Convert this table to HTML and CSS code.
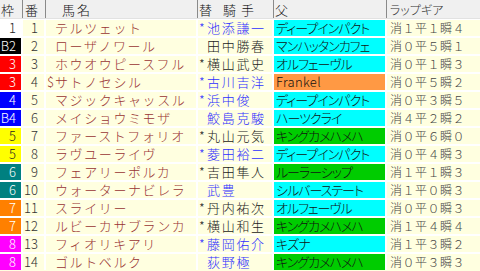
FILE: index.html
```html
<!DOCTYPE html>
<html lang="ja">
<head>
<meta charset="utf-8">
<link rel="stylesheet" href="styles.css">
</head>
<body>
<div class="sheet">
  <div class="head">
    <div class="h h-waku">枠</div>
    <div class="h h-ban">番</div>
    <div class="h h-name">馬名</div>
    <div class="h h-jockey"><span class="kae">替</span><span class="kishu">騎手</span></div>
    <div class="h h-sire">父</div>
    <div class="h h-lap">ラップギア</div>
  </div>
  <div class="rows">
    <div class="row"><div class="c waku w1">1</div><div class="c ban">1</div><div class="c name"><span class="mk"></span>テルツェット</div><div class="c jk blue"><span class="mk">*</span>池添謙一</div><div class="c sire cyan">ディープインパクト</div><div class="c lap">消１平１瞬４</div></div>
    <div class="row"><div class="c waku w2">B2</div><div class="c ban">2</div><div class="c name"><span class="mk"></span>ローザノワール</div><div class="c jk dark"><span class="mk"></span>田中勝春</div><div class="c sire cyan">マンハッタンカフェ</div><div class="c lap">消０平５瞬１</div></div>
    <div class="row"><div class="c waku w3">3</div><div class="c ban">3</div><div class="c name"><span class="mk"></span>ホウオウピースフル</div><div class="c jk dark"><span class="mk">*</span>横山武史</div><div class="c sire cyan">オルフェーヴル</div><div class="c lap">消０平１瞬３</div></div>
    <div class="row"><div class="c waku w3">3</div><div class="c ban">4</div><div class="c name"><span class="mk">$</span>サトノセシル</div><div class="c jk blue"><span class="mk">*</span>古川吉洋</div><div class="c sire orange latin">Frankel</div><div class="c lap">消０平５瞬２</div></div>
    <div class="row"><div class="c waku w4">4</div><div class="c ban">5</div><div class="c name"><span class="mk"></span>マジックキャッスル</div><div class="c jk blue"><span class="mk">*</span>浜中俊</div><div class="c sire cyan">ディープインパクト</div><div class="c lap">消０平３瞬５</div></div>
    <div class="row"><div class="c waku w4">B4</div><div class="c ban">6</div><div class="c name"><span class="mk"></span>メイショウミモザ</div><div class="c jk blue"><span class="mk"></span>鮫島克駿</div><div class="c sire cyan">ハーツクライ</div><div class="c lap">消４平２瞬２</div></div>
    <div class="row"><div class="c waku w5">5</div><div class="c ban">7</div><div class="c name"><span class="mk"></span>ファーストフォリオ</div><div class="c jk dark"><span class="mk">*</span>丸山元気</div><div class="c sire green">キングカメハメハ</div><div class="c lap">消０平６瞬０</div></div>
    <div class="row"><div class="c waku w5">5</div><div class="c ban">8</div><div class="c name"><span class="mk"></span>ラヴユーライヴ</div><div class="c jk blue"><span class="mk">*</span>菱田裕二</div><div class="c sire cyan">ディープインパクト</div><div class="c lap">消０平４瞬３</div></div>
    <div class="row"><div class="c waku w6">6</div><div class="c ban">9</div><div class="c name"><span class="mk"></span>フェアリーポルカ</div><div class="c jk dark"><span class="mk">*</span>吉田隼人</div><div class="c sire green">ルーラーシップ</div><div class="c lap">消１平１瞬３</div></div>
    <div class="row"><div class="c waku w6">6</div><div class="c ban">10</div><div class="c name"><span class="mk"></span>ウォーターナビレラ</div><div class="c jk blue"><span class="mk"></span>武豊</div><div class="c sire cyan">シルバーステート</div><div class="c lap">消１平０瞬３</div></div>
    <div class="row"><div class="c waku w7">7</div><div class="c ban">11</div><div class="c name"><span class="mk"></span>スライリー</div><div class="c jk dark"><span class="mk">*</span>丹内祐次</div><div class="c sire cyan">オルフェーヴル</div><div class="c lap">消０平０瞬３</div></div>
    <div class="row"><div class="c waku w7">7</div><div class="c ban">12</div><div class="c name"><span class="mk"></span>ルビーカサブランカ</div><div class="c jk dark"><span class="mk">*</span>横山和生</div><div class="c sire green">キングカメハメハ</div><div class="c lap">消１平４瞬４</div></div>
    <div class="row"><div class="c waku w8">8</div><div class="c ban">13</div><div class="c name"><span class="mk"></span>フィオリキアリ</div><div class="c jk blue"><span class="mk">*</span>藤岡佑介</div><div class="c sire cyan">キズナ</div><div class="c lap">消１平３瞬２</div></div>
    <div class="row"><div class="c waku w8">8</div><div class="c ban">14</div><div class="c name"><span class="mk"></span>ゴルトベルク</div><div class="c jk blue"><span class="mk"></span>荻野極</div><div class="c sire green">キングカメハメハ</div><div class="c lap">消０平３瞬３</div></div>
  </div>
</div>
</body>
</html>
```

FILE: styles.css
```css
html, body {
  margin: 0;
  padding: 0;
  background: #ffffe0;
}
body {
  width: 480px;
  height: 271px;
  overflow: hidden;
  font-family: "Noto Sans CJK JP", "Noto Sans", sans-serif;
  font-size: 13px;
  font-weight: 300;
  color: #222;
}
.sheet {
  width: 480px;
}
.head {
  display: grid;
  grid-template-columns: 22px 23px 152px 76px 113px 94px;
  height: 18px;
  background: #f0f0f0;
  border-bottom: 1px solid #e2e2e2;
}
.h {
  line-height: 18px;
  padding-top: 1px;
  height: 17px;
  white-space: nowrap;
  color: #111;
}
.h + .h {
  border-left: 1px solid #8a8a8a;
}
.h-waku { padding-left: 1px; }
.h-ban { padding-left: 2px; }
.h-name { padding-left: 16px; letter-spacing: 2px; }
.h-jockey { padding-left: 1px; }
.h-jockey .kishu { margin-left: 11px; letter-spacing: 5px; }
.h-sire { padding-left: 1px; }
.h-lap {
  padding-left: 3px;
  font-size: 12px;
  font-feature-settings: "palt";
  color: #333;
}
.rows {
  display: flex;
  flex-direction: column;
  gap: 2px;
  padding-top: 1px;
  background: #ffffff;
}
.row {
  display: grid;
  grid-template-columns: 21px 21px 150px 74px 111px 93px;
  column-gap: 2px;
  height: 16px;
}
.c {
  background: #ffffe0;
  line-height: 16px;
  height: 16px;
  white-space: nowrap;
}
.waku {
  text-align: right;
  padding-right: 5px;
  color: #fff;
}
.w1 { background: #ffffff; color: #222; }
.w2 { background: #000000; color: #fff; }
.w3 { background: #ff0000; color: #fff; }
.w4 { background: #0000ff; color: #fff; }
.w5 { background: #ffff00; color: #222; }
.w6 { background: #008080; color: #fff; }
.w7 { background: #ff8000; color: #fff; }
.w8 { background: #ff00ff; color: #fff; }
.ban {
  text-align: right;
  padding-right: 6px;
  color: #333;
}
.name {
  padding-left: 1px;
  color: #993333;
  letter-spacing: 1.6px;
}
.mk {
  display: inline-block;
  width: 8px;
  letter-spacing: 0;
}
.jk {
  padding-left: 1px;
  letter-spacing: 1.7px;
}
.blue { color: #2f2fff; }
.dark { color: #222; }
.sire {
  padding-left: 2px;
  color: #111;
  letter-spacing: -1px;
  font-feature-settings: "palt";
}
.sire.latin {
  letter-spacing: 0.3px;
}
.cyan { background: #00ffff; }
.orange { background: #ff9944; }
.green { background: #00cc00; }
.lap {
  padding-left: 3px;
  font-size: 12px;
  letter-spacing: 0.5px;
  color: #444;
}
```
